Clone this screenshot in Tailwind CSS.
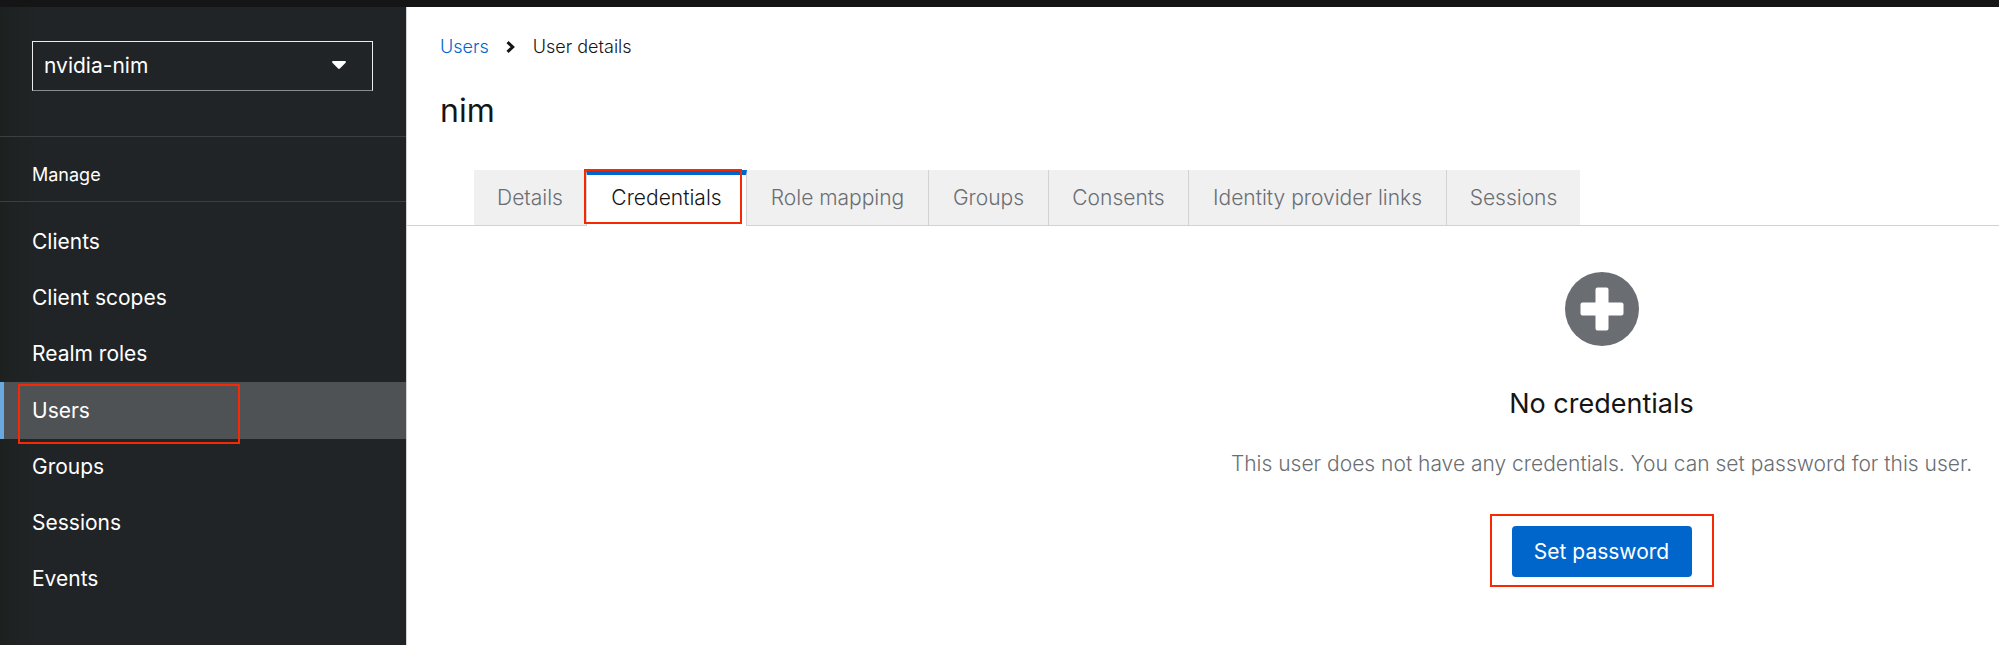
<!DOCTYPE html>
<html lang="en">
<head>
<meta charset="utf-8">
<meta name="viewport" content="width=device-width, initial-scale=1">
<title>User details</title>
<script src="https://cdn.jsdelivr.net/npm/@tailwindcss/browser@4"></script>
</head>
<body class="flex min-h-screen flex-col bg-white pb-px font-['Inter','Liberation_Sans',sans-serif] text-[21px] leading-7 text-[#151515]">
  <header class="h-[7px] bg-[#151515]"></header>
  <div class="flex flex-1">

    <aside class="w-[406px] shrink-0 bg-linear-to-r from-[#1c2120] to-[#212427] to-10% text-white">
      <div class="pt-[34px] pr-[33px] pb-[45px] pl-8">
        <div class="relative">
          <select aria-label="Realm" class="h-[50px] w-full appearance-none border border-[#ededed] border-b-[#8a8d90] bg-transparent px-[11px] outline-none">
            <option>nvidia-nim</option>
          </select>
          <svg class="pointer-events-none absolute top-5 right-[27px] h-2 w-[14px]" viewBox="0 0 14 8" fill="currentColor" aria-hidden="true"><path d="M1.3 0h11.4c1.1 0 1.6 1.1.9 1.8L7.900 7.500a1.300 1.300 0 0 1-1.800 0L.4 1.800C-.3 1.100.2 0 1.300 0z"/></svg>
        </div>
      </div>
      <nav aria-labelledby="manage">
        <h2 id="manage" class="flex h-[66px] items-center border-y border-[#3c3f42] px-8 pt-3 text-lg">Manage</h2>
        <ul class="pt-3">
          <li><a href="#clients" class="flex h-14 items-center px-8">Clients</a></li>
          <li><a href="#client-scopes" class="flex h-14 items-center px-8">Client scopes</a></li>
          <li><a href="#realm-roles" class="flex h-14 items-center px-8">Realm roles</a></li>
          <li class="relative">
            <a href="#users" aria-current="page" class="flex h-[57px] items-center border-l-4 border-[#6aa9e0] bg-[#4f5255] px-7">Users</a>
            <span class="pointer-events-none absolute top-[2px] left-[18px] h-[60px] w-[222px] border-2 border-[#f52a05]"></span>
          </li>
          <li><a href="#groups" class="flex h-14 items-center px-8">Groups</a></li>
          <li><a href="#sessions" class="flex h-14 items-center px-8">Sessions</a></li>
          <li><a href="#events" class="flex h-14 items-center px-8">Events</a></li>
        </ul>
      </nav>
    </aside>

    <main class="min-w-0 flex-1 border-l border-[#d2d2d2]">
      <div class="px-[33px] pt-[26px]">
        <nav aria-label="Breadcrumb" class="flex items-center text-lg font-light">
          <a href="#users" class="text-[#0066cc]">Users</a>
          <svg class="mr-[18px] ml-[17px] h-3 w-[9px]" viewBox="0 0 9 12" fill="none" stroke="currentColor" stroke-width="3" aria-hidden="true"><path d="M1.500 1.200L6.700 6L1.500 10.800"/></svg>
          <span>User details</span>
        </nav>
        <h1 class="mt-[30px] text-[32px] leading-10">nim</h1>
      </div>

      <div role="tablist" class="mt-[39px] flex h-14 border-b border-[#d2d2d2] pl-[67px] font-light text-[#6a6e73]">
        <button role="tab" class="h-[55px] w-[112px] bg-[#f0f0f0]">Details</button>
        <div class="relative">
          <button role="tab" aria-selected="true" class="h-14 w-[161px] border-x border-t-5 border-x-[#d2d2d2] border-t-[#0066cc] bg-white pb-[5px] text-[#151515]">Credentials</button>
          <span class="pointer-events-none absolute -top-px -left-[2px] h-[55px] w-[158px] border-2 border-[#f52a05]"></span>
        </div>
        <button role="tab" class="h-[55px] w-[182px] border-r border-[#d2d2d2] bg-[#f0f0f0]">Role mapping</button>
        <button role="tab" class="h-[55px] w-[120px] border-r border-[#d2d2d2] bg-[#f0f0f0]">Groups</button>
        <button role="tab" class="h-[55px] w-[140px] border-r border-[#d2d2d2] bg-[#f0f0f0]">Consents</button>
        <button role="tab" class="h-[55px] w-[258px] border-r border-[#d2d2d2] bg-[#f0f0f0]">Identity provider links</button>
        <button role="tab" class="h-[55px] w-[133px] bg-[#f0f0f0]">Sessions</button>
      </div>

      <section class="grid grid-cols-2 pt-[46px] pl-[2px]">
        <div class="col-start-2 flex flex-col items-center text-center">
          <svg class="size-[74px] text-[#6a6e73]" viewBox="0 0 74 74" aria-hidden="true"><circle cx="37" cy="37" r="37" fill="currentColor"/><path fill="#fff" d="M32.500 15.500h9a2 2 0 0 1 2 2v13h13a2 2 0 0 1 2 2v9a2 2 0 0 1-2 2h-13v13a2 2 0 0 1-2 2h-9a2 2 0 0 1-2-2v-13h-13a2 2 0 0 1-2-2v-9a2 2 0 0 1 2-2h13v-13a2 2 0 0 1 2-2z"/></svg>
          <h2 class="mt-10 text-[27px] leading-9">No credentials</h2>
          <p class="mt-7 font-light text-[#6a6e73]">This user does not have any credentials. You can set password for this user.</p>
          <div class="mt-9 border-2 border-[#f52a05] px-5 pt-[10px] pb-2">
            <button class="h-[51px] w-[180px] rounded-sm bg-[#0066cc] text-white">Set password</button>
          </div>
        </div>
      </section>
    </main>
  </div>
</body>
</html>
